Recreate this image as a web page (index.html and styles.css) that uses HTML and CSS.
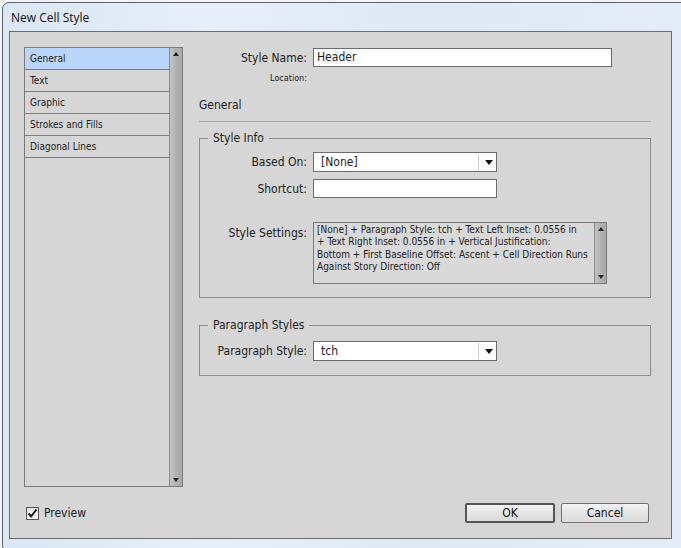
FILE: index.html
```html
<!DOCTYPE html>
<html lang="en">
  <head>
    <meta charset="UTF-8" />
    <title>New Cell Style</title>
    <link rel="stylesheet" href="styles.css">
  </head>
  <body>
    <div class="window">
      <div class="titlebar">New Cell Style</div>

      <div class="client">
        <div class="body">
          <!-- Category list -->
          <div class="sidebar">
            <ul class="list">
              <li class="selected">General</li>
              <li>Text</li>
              <li>Graphic</li>
              <li>Strokes and Fills</li>
              <li>Diagonal Lines</li>
            </ul>
            <div class="scrollbar">
              <span class="arrow up"></span>
              <span class="arrow down"></span>
            </div>
          </div>

          <!-- General panel -->
          <div class="main">
            <div class="row name-row">
              <label class="label">Style Name:</label>
              <div class="textbox name-box">Header</div>
            </div>
            <div class="row location-row">
              <span class="label small">Location:</span>
            </div>

            <h2 class="section">General</h2>

            <fieldset class="group info">
              <legend>Style Info</legend>
              <div class="row">
                <label class="label">Based On:</label>
                <div class="select">
                  <span class="value">[None]</span>
                  <span class="drop"><span class="tri"></span></span>
                </div>
              </div>
              <div class="row shortcut-row">
                <label class="label">Shortcut:</label>
                <div class="textbox short-box"></div>
              </div>
              <div class="row settings-row">
                <label class="label">Style Settings:</label>
                <div class="settings">
                  <p>[None] + Paragraph Style: tch + Text Left Inset: 0.0556 in<br>
                    + Text Right Inset: 0.0556 in + Vertical Justification:<br>
                    Bottom + First Baseline Offset: Ascent + Cell Direction Runs<br>
                    Against Story Direction: Off</p>
                  <div class="scrollbar small-bar">
                    <span class="arrow up"></span>
                    <span class="arrow down"></span>
                  </div>
                </div>
              </div>
            </fieldset>

            <fieldset class="group para">
              <legend>Paragraph Styles</legend>
              <div class="row">
                <label class="label">Paragraph Style:</label>
                <div class="select">
                  <span class="value">tch</span>
                  <span class="drop"><span class="tri"></span></span>
                </div>
              </div>
            </fieldset>
          </div>
        </div>

        <div class="footer">
          <label class="preview">
            <span class="checkbox">
              <svg width="11" height="11" viewBox="0 0 11 11"><path d="M1.5 5.5 L4 8.5 L9.5 1.5" fill="none" stroke="#111" stroke-width="2"/></svg>
            </span>
            Preview
          </label>
          <div class="buttons">
            <button class="btn default">OK</button>
            <button class="btn">Cancel</button>
          </div>
        </div>
      </div>
    </div>
  </body>
</html>
```

FILE: styles.css
```css
body {
  margin: 0;
  background: #f3f3f6;
  font-family: "DejaVu Sans Condensed", "DejaVu Sans", sans-serif;
  font-stretch: condensed;
  color: #1c1c1c;
}

.window {
  margin: 2px 0 0 2px;
  width: 674px;
  height: 541px;
  padding: 0 5px 5px 6px;
  border: 1px solid #5d6670;
  border-radius: 7px 7px 4px 4px;
  background: linear-gradient(90deg, #dbe7f5 0%, #e6eefa 30%, #dfe9f6 60%, #e3ecf8 100%);
}

.titlebar {
  height: 28px;
  line-height: 29px;
  padding-left: 2px;
  font-family: "Open Sans", sans-serif;
  font-stretch: normal;
  font-size: 12px;
  color: #111;
}

.client {
  width: 661px;
  height: 506px;
  border: 1px solid #6b6b6b;
  background: #d6d6d6;
}

.body {
  display: flex;
  padding: 15px 0 0 14px;
}

/* left list */
.sidebar {
  display: flex;
  width: 157px;
  height: 438px;
  border: 1px solid #7a7a7a;
}

.list {
  flex: 1;
  margin: 0;
  padding: 0;
  list-style: none;
  font-size: 10px;
}

.list li {
  height: 21px;
  line-height: 21px;
  padding-left: 5px;
  border-bottom: 1px solid #7d7d7d;
}

.list li.selected {
  background: #b9d6fa;
}

.scrollbar {
  display: flex;
  flex-direction: column;
  justify-content: space-between;
  width: 12px;
  border-left: 1px solid #8a8a8a;
  background: linear-gradient(90deg, #c4c4c4, #b2b2b2 50%, #a9a9a9);
}

.arrow {
  display: block;
  height: 12px;
  position: relative;
}

.arrow::after {
  content: "";
  position: absolute;
  left: 3px;
  border-left: 3px solid transparent;
  border-right: 3px solid transparent;
}

.arrow.up::after {
  top: 4px;
  border-bottom: 4px solid #222;
}

.arrow.down::after {
  bottom: 4px;
  border-top: 4px solid #222;
}

/* right panel */
.main {
  margin-left: 16px;
  width: 452px;
}

.row {
  display: flex;
  align-items: center;
}

.label {
  width: 108px;
  margin-right: 6px;
  text-align: right;
  font-size: 12px;
  white-space: nowrap;
}

.label.small {
  font-size: 9px;
}

.textbox {
  height: 17px;
  line-height: 17px;
  border: 1px solid #6c6c6c;
  background: #fff;
  font-size: 12px;
  padding-left: 3px;
  box-sizing: content-box;
}

.name-row {
  margin-top: 1px;
}

.name-box {
  width: 294px;
}

.location-row {
  margin-top: 5px;
  height: 12px;
}

.section {
  margin: 13px 0 0;
  font-size: 12px;
  font-weight: normal;
  line-height: 16px;
  padding-bottom: 8px;
  border-bottom: 1px solid #a6a6a6;
}

.group {
  margin: 8px 0 0;
  padding: 0;
  border: 1px solid #8c8c8c;
  min-width: 0;
}

.group legend {
  margin-left: 8px;
  padding: 0 5px;
  font-size: 12px;
  line-height: 16px;
}

.group .label {
  width: 107px;
}

.info {
  padding: 6px 0 13px;
}

.select {
  display: flex;
  width: 182px;
  height: 18px;
  border: 1px solid #6c6c6c;
  background: #fff;
  font-size: 12px;
}

.select .value {
  flex: 1;
  padding-left: 7px;
  line-height: 18px;
}

.select .drop {
  width: 17px;
  border-left: 1px solid #c9c9c9;
  margin: 1px 0;
  position: relative;
}

.tri {
  position: absolute;
  left: 6px;
  top: 6px;
  border-left: 4px solid transparent;
  border-right: 4px solid transparent;
  border-top: 5px solid #111;
}

.shortcut-row {
  margin-top: 7px;
}

.short-box {
  width: 179px;
}

.settings-row {
  align-items: flex-start;
  margin-top: 24px;
}

.settings-row .label {
  margin-top: 4px;
}

.settings {
  display: flex;
  width: 292px;
  height: 60px;
  border: 1px solid #7a7a7a;
  background: #d9d9d9;
}

.settings p {
  flex: 1;
  margin: 0;
  padding: 1px 2px 0 3px;
  font-size: 10px;
  line-height: 12.4px;
  white-space: nowrap;
  overflow: hidden;
}

.small-bar {
  width: 11px;
}

.para {
  margin-top: 19px;
  padding: 8px 0 14px;
}

.para .label {
  width: 107px;
}

/* footer */
.footer {
  display: flex;
  justify-content: space-between;
  align-items: center;
  padding: 16px 22px 0 16px;
}

.preview {
  display: flex;
  align-items: center;
  font-size: 12px;
}

.checkbox {
  display: flex;
  align-items: center;
  justify-content: center;
  width: 11px;
  height: 11px;
  margin-right: 5px;
  border: 1px solid #555;
  background: linear-gradient(#e6e6e6, #fafafa);
}

.buttons {
  display: flex;
  gap: 6px;
}

.btn {
  height: 20px;
  width: 88px;
  padding: 0;
  border: 1px solid #707070;
  border-radius: 2px;
  background: linear-gradient(#f4f4f4, #e4e4e4 50%, #dcdcdc);
  font-family: "DejaVu Sans Condensed", "DejaVu Sans", sans-serif;
  font-stretch: condensed;
  font-size: 12px;
  color: #111;
}

.btn.default {
  width: 90px;
  border: 2px solid #555;
}
```
